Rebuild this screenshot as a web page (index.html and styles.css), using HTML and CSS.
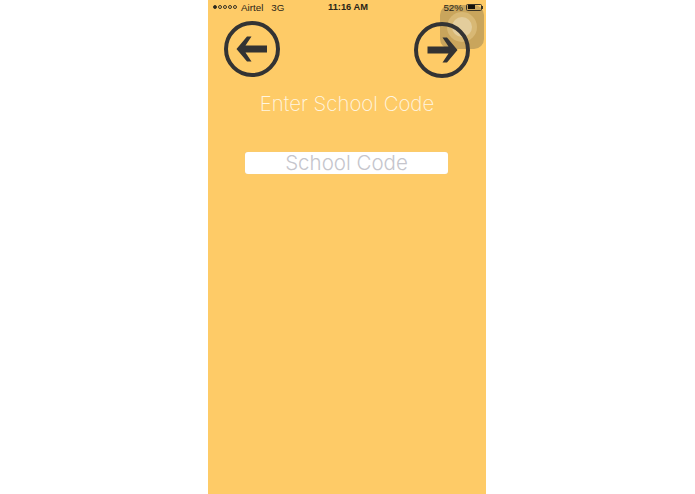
FILE: index.html
```html
<!DOCTYPE html>
<html lang="en">
<head>
<meta charset="utf-8">
<title>Enter School Code</title>
<link rel="stylesheet" href="styles.css">
</head>
<body>
<main class="phone">
  <header class="status">
    <div class="status-left">
      <span class="signal"><i class="dot on"></i><i class="dot"></i><i class="dot"></i><i class="dot"></i><i class="dot"></i></span>
      <span class="carrier">Airtel</span>
      <span class="net">3G</span>
    </div>
    <div class="status-time">11:16 AM</div>
    <div class="status-right">
      <span>52%</span>
      <span class="battery"><span class="battery-fill"></span></span><span class="battery-tip"></span>
    </div>
  </header>
  <nav class="nav">
    <svg class="nav-icon" viewBox="0 0 56 56" aria-label="Back">
      <circle cx="28" cy="28" r="26" fill="none" stroke="#333333" stroke-width="4"/>
      <path d="M43 24.6H21.5L27.5 15.5H23L12.5 28L23 40.5H27.5L21.5 31.4H43Z" fill="#333333"/>
    </svg>
    <svg class="nav-icon nav-next" viewBox="0 0 56 56" aria-label="Next">
      <circle cx="28" cy="28" r="26" fill="none" stroke="#333333" stroke-width="4"/>
      <path d="M13.5 24.6H34.5L28.5 15.5H33L43.5 28L33 40.5H28.5L34.5 31.4H13.5Z" fill="#333333"/>
    </svg>
  </nav>
  <h1 class="title">Enter School Code</h1>
  <div class="field"><input class="code" type="text" placeholder="School Code"></div>
  <div class="assistive"><span class="assistive-ring"><span class="assistive-core"></span></span></div>
</main>
</body>
</html>
```
FILE: styles.css
```css
html, body { margin: 0; padding: 0; height: 100%; background: #fff; }
body { font-family: "Inter", "Liberation Sans", sans-serif; overflow: hidden; }

.phone {
  position: relative;
  width: 278px;
  height: 494px;
  margin-left: 208px;
  background: #fecb67;
  display: flex;
  flex-direction: column;
}

.status {
  position: relative;
  z-index: 2;
  height: 14px;
  padding: 0 3px 0 5px;
  display: grid;
  grid-template-columns: 1fr auto 1fr;
  align-items: center;
  font-family: "Liberation Sans", sans-serif;
  font-size: 9.8px;
  color: #2a2518;
}
.status-left { display: flex; align-items: center; }
.signal { display: flex; gap: 1px; margin-right: 4px; }
.dot { width: 4px; height: 4px; box-sizing: border-box; border: 0.6px solid #3a3425; border-radius: 50%; }
.dot.on { background: #2a2518; }
.net { margin-left: 8px; }
.status-time { font-weight: 700; font-size: 9.3px; }
.status-right { display: flex; align-items: center; justify-content: flex-end; }
.battery {
  width: 16px; height: 7px; margin-left: 3px; box-sizing: border-box;
  border: 0.7px solid #3a3425; border-radius: 1.5px; padding: 0.5px; display: flex;
}
.battery-fill { width: 60%; background: #14110a; }
.battery-tip { width: 1px; height: 3px; background: #3a3425; }

.nav {
  display: flex;
  justify-content: space-between;
  align-items: flex-start;
  height: 58px;
  padding: 6.5px 16px 0 15.5px;
  box-sizing: border-box;
  position: relative;
  z-index: 2;
}
.nav-icon { width: 56px; height: 56px; display: block; }
.nav-next { margin-top: 1px; }

.title {
  margin: 19px 0 0;
  text-align: center;
  font-weight: 200;
  font-size: 20.4px;
  line-height: 26px;
  height: 26px;
  color: #fff6e2;
}

.field { display: flex; justify-content: center; margin-top: 35px; padding-right: 1px; }
.code {
  width: 203px;
  height: 22px;
  box-sizing: border-box;
  border: 0;
  border-radius: 3px;
  padding: 0 0 2px;
  background: #fff;
  box-shadow: 0 0 1px #d9c89f;
  text-align: center;
  font-family: "Inter", "Liberation Sans", sans-serif;
  font-weight: 350;
  font-size: 20.5px;
}
.code::placeholder { color: #c5c5cc; opacity: 1; }

.assistive {
  position: absolute;
  z-index: 1;
  left: 232px;
  top: 5px;
  width: 44px;
  height: 44px;
  border-radius: 10px;
  background: #c9a55c;
  display: flex;
  align-items: center;
  justify-content: center;
}
.assistive-ring {
  width: 30px; height: 30px; border-radius: 50%;
  background: #d8b874;
  display: flex; align-items: center; justify-content: center;
}
.assistive-core { width: 20px; height: 20px; border-radius: 50%; background: #e3cd9c; }
```
